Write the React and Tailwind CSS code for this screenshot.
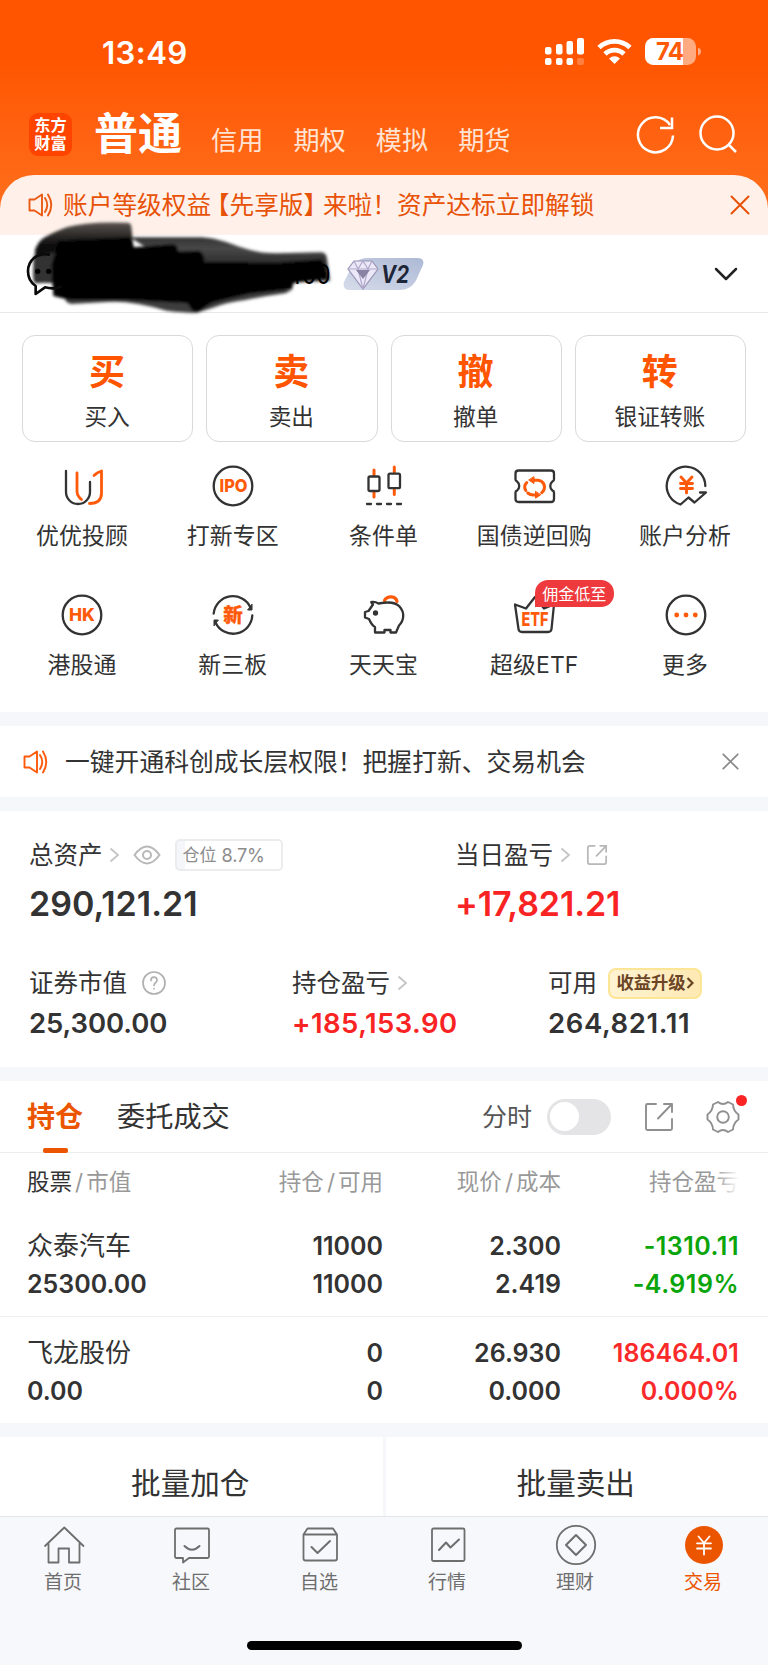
import React, { useState } from 'react'
import { clsx } from 'clsx'

const MARKETS = ['信用', '期权', '模拟', '期货']

const ACTIONS = [
    { mark: '买', label: '买入' },
    { mark: '卖', label: '卖出' },
    { mark: '撤', label: '撤单' },
    { mark: '转', label: '银证转账' },
]

const DARK = '#333333'
const ORANGE = '#ff5a0a'

const SERVICES = [
    { label: '优优投顾', icon: AdvisorIcon },
    { label: '打新专区', icon: IpoIcon },
    { label: '条件单', icon: CandleIcon },
    { label: '国债逆回购', icon: RepoIcon },
    { label: '账户分析', icon: AnalysisIcon },
    { label: '港股通', icon: HkIcon },
    { label: '新三板', icon: NeeqIcon },
    { label: '天天宝', icon: PiggyIcon },
    { label: '超级ETF', icon: EtfIcon, badge: '佣金低至' },
    { label: '更多', icon: MoreIcon },
]

const HOLDINGS = [
    { name: '众泰汽车', value: '25300.00', qty: '11000', usable: '11000', price: '2.300', cost: '2.419', pnl: '-1310.11', rate: '-4.919%', color: 'text-[#0aa50a] tracking-[0.5px]' },
    { name: '飞龙股份', value: '0.00', qty: '0', usable: '0', price: '26.930', cost: '0.000', pnl: '186464.01', rate: '0.000%', color: 'text-[#fa2a2a] tracking-[0.1px]' },
]

const NAV = [
    { label: '首页', icon: HomeIcon },
    { label: '社区', icon: ChatIcon },
    { label: '自选', icon: WatchIcon },
    { label: '行情', icon: QuoteIcon },
    { label: '理财', icon: WealthIcon },
    { label: '交易', icon: TradeIcon, active: true },
]

/* ---------- service icons, 44x44 ---------- */

function ServiceSvg({ children }) {
    return (
        <svg width="44" height="44" viewBox="0 0 44 44" fill="none" stroke={DARK} strokeWidth="2.3" strokeLinecap="round" strokeLinejoin="round">
            {children}
        </svg>
    )
}

function AdvisorIcon() {
    return (
        <ServiceSvg>
            <path d="M6 7v21a12 12 0 0 0 24 0V18" />
            <path d="M17 9v18q0 5 4.500 8.500" stroke={ORANGE} strokeWidth="2.800" />
            <path d="M34 11.500q3-3 7.500-4.500v22q0 10.500-12 10.500" stroke={ORANGE} strokeWidth="2.800" />
        </ServiceSvg>
    )
}

function IpoIcon() {
    return (
        <ServiceSvg>
            <circle cx="22" cy="22" r="19.300" />
            <text x="22.500" y="28.300" textAnchor="middle" fontSize="17.500" fontWeight="800" textLength="28" lengthAdjust="spacingAndGlyphs" fill={ORANGE} stroke="none" fontFamily="Inter, sans-serif">IPO</text>
        </ServiceSvg>
    )
}

function CandleIcon() {
    return (
        <ServiceSvg>
            <g stroke={ORANGE} strokeWidth="3">
                <path d="M12 6v5M12 28v5M32.300 3v5M32.300 25.500v5" />
            </g>
            <rect x="6.500" y="12.500" width="11" height="14.500" rx="1.500" />
            <rect x="26.500" y="9.700" width="11.500" height="14.500" rx="1.500" />
            <path d="M5 40h34" strokeDasharray="4 6" />
        </ServiceSvg>
    )
}

function RepoIcon() {
    return (
        <ServiceSvg>
            <path d="M5.500 6.500h32.500q3 0 3 3v6q0 1.300-1.500 1.800c-3 2.500-3 6.900 0 9.400q1.500.5 1.500 1.800v6.500q0 3-3 3H5.500q-3 0-3-3v-6.500q0-1.300 1.500-1.800c3-2.500 3-6.900 0-9.400q-1.500-.5-1.500-1.800v-6q0-3 3-3z" />
            <g stroke={ORANGE} strokeWidth="3">
                <path d="M12.800 26.500c-2.500-4-.5-6.500 1-8M20 16.300h5c5 .5 8 5 5.700 10M30.700 26.500l-2 2.200M23.500 31h-3q-3.500-.2-5.700-2" />
                <path d="M21 13v6.500l-5-3.300zM22.500 27.700v6.500l5-3.300z" fill={ORANGE} strokeWidth="1" />
            </g>
        </ServiceSvg>
    )
}

function AnalysisIcon() {
    return (
        <ServiceSvg>
            <path d="M41.300 22A19.300 19.300 0 1 0 16.500 40.500l8-7 6 5L42 28.500h-6" />
            <path d="M17 13l5.500 6L28 13M16.500 19.500h12M16.500 24.500h12M22.500 19.500v9.500" stroke={ORANGE} strokeWidth="2.900" />
        </ServiceSvg>
    )
}

function HkIcon() {
    return (
        <ServiceSvg>
            <circle cx="22" cy="22" r="19.300" />
            <text x="22" y="28.300" textAnchor="middle" fontSize="17.500" fontWeight="800" textLength="26" lengthAdjust="spacingAndGlyphs" fill={ORANGE} stroke="none" fontFamily="Inter, sans-serif">HK</text>
        </ServiceSvg>
    )
}

function NeeqIcon() {
    return (
        <ServiceSvg>
            <path d="M2.700 20.500A19.300 19.300 0 0 1 39.500 14.500" />
            <path d="M41.300 22.500A19.300 19.300 0 0 1 4.500 29.500" />
            <path d="M41 11.500v5.500h-4zM3 32.500v-5.500h4z" fill={DARK} strokeWidth="1" />
            <text x="22" y="29" textAnchor="middle" fontSize="19.500" fontWeight="900" fill={ORANGE} stroke={ORANGE} strokeWidth="0.300" fontFamily="'Noto Sans CJK SC', sans-serif">新</text>
        </ServiceSvg>
    )
}

function PiggyIcon() {
    return (
        <ServiceSvg>
            <path d="M22.500 7.500c2.500-5 11.500-5 12.500 1" stroke={ORANGE} strokeWidth="3.200" />
            <path d="M11 11.500c-1.500-1.500-2-2.500-1.500-2.500 2.500-.3 5 .3 7 1.500 11-2 17-1.500 21 3 5.500 6 4.500 14-.5 19l-3 7h-5.500v-2.500h-6v2.500H13v-5.500c-3-1.500-4.500-4.500-6-8l-4-1.500v-5.500l3.500-1z" />
            <circle cx="13.500" cy="20" r="1.500" fill={DARK} />
        </ServiceSvg>
    )
}

function EtfIcon() {
    return (
        <ServiceSvg>
            <path d="M2 11.500l11 4 9-11.500 9 11.500 10-4-2.500 24.500q-.3 3-3.500 3H9q-3.200 0-3.500-3z" />
            <text x="22" y="32.500" textAnchor="middle" fontSize="19" fontWeight="800" fill={ORANGE} stroke="none" textLength="27" lengthAdjust="spacingAndGlyphs" fontFamily="Inter, sans-serif">ETF</text>
        </ServiceSvg>
    )
}

function MoreIcon() {
    return (
        <ServiceSvg>
            <circle cx="22" cy="22" r="19.300" />
            <g fill={ORANGE} stroke="none">
                <circle cx="12.700" cy="22" r="2.400" />
                <circle cx="22" cy="22" r="2.400" />
                <circle cx="31.300" cy="22" r="2.400" />
            </g>
        </ServiceSvg>
    )
}

/* ---------- bottom nav icons, 42x42 ---------- */

function NavSvg({ children }) {
    return (
        <svg width="42" height="42" viewBox="0 0 42 42" fill="none" stroke="#6e6e6e" strokeWidth="1.800" strokeLinecap="round" strokeLinejoin="round">
            {children}
        </svg>
    )
}

function HomeIcon() {
    return <NavSvg><path d="M2 22L21.300 3.500 40.500 22M5.500 19.500v19h10v-14h10.500v14h10.500v-19" /></NavSvg>
}

function ChatIcon() {
    return (
        <NavSvg>
            <path d="M5.500 4.500h31q1.500 0 1.500 1.500v26.500q0 1.500-1.500 1.500H18l-6 4.500V34H5.500Q4 34 4 32.500V6q0-1.500 1.500-1.500z" />
            <path d="M13.500 22q7.500 7.500 15 0" strokeWidth="2" />
        </NavSvg>
    )
}

function WatchIcon() {
    return (
        <NavSvg>
            <path d="M4.500 10.500l4-6h25.500l4 6v24q0 2-2 2H6.500q-2 0-2-2zM4.500 10.500H38" />
            <path d="M12.500 23l6 6L31 17" strokeWidth="2" />
        </NavSvg>
    )
}

function QuoteIcon() {
    return (
        <NavSvg>
            <rect x="5" y="4.500" width="32.500" height="32.500" rx="1.500" />
            <path d="M12 26l7-7.500 4.500 5L32 15.500" strokeWidth="2" />
        </NavSvg>
    )
}

function WealthIcon() {
    return (
        <NavSvg>
            <circle cx="21" cy="21" r="19.200" />
            <path d="M21 11l10 10-10 10-10-10z" strokeWidth="2" />
        </NavSvg>
    )
}

function TradeIcon() {
    return (
        <NavSvg>
            <circle cx="21" cy="21" r="19" fill="#eb5500" stroke="none" />
            <path d="M15.500 12.500l5.500 6.500 5.500-6.500M14 19.300h14M14 24.500h14M21 19v11.500" stroke="#fff" strokeWidth="1.800" />
        </NavSvg>
    )
}

/* ---------- small shared icons ---------- */

function Speaker({ color }) {
    return (
        <svg width="26" height="26" viewBox="0 0 26 26" fill="none" stroke={color} strokeWidth="1.900" strokeLinejoin="round" strokeLinecap="round">
            <path d="M1.500 7.500h5L14 2.500v21l-7.500-5h-5z" />
            <path d="M17 6q4.500 7 0 14M20 2.500q6.500 10.500 0 21" />
        </svg>
    )
}

function Cross({ size, color }) {
    return (
        <svg width={size} height={size} viewBox="0 0 20 20" fill="none" stroke={color} strokeWidth="2" strokeLinecap="round">
            <path d="M1.500 1.500l17 17M18.500 1.500l-17 17" />
        </svg>
    )
}

function Chevron() {
    return (
        <svg width="11" height="16" viewBox="0 0 11 16" fill="none" stroke="#c4c4c4" strokeWidth="1.800">
            <path d="M1.500 1.500L9 8l-7.500 6.500" />
        </svg>
    )
}

function StatusBar() {
    return (
        <div className="flex h-[104px] items-center pl-[102px] pr-[67px] text-white">
            <span className="mt-[3px] text-[31.200px] font-semibold leading-none tracking-[0.4px]">13:49</span>
            <svg className="ml-auto" width="156" height="30" viewBox="0 0 156 30" fill="#fff">
                <rect x="0" y="10" width="6.500" height="7.500" rx="2" />
                <rect x="11" y="7" width="6.500" height="10.500" rx="2" />
                <rect x="21.500" y="4" width="6.500" height="13.500" rx="2" />
                <rect x="32" y="1" width="7" height="16.500" rx="2" />
                <rect x="0" y="21" width="6.500" height="7" rx="2" />
                <rect x="11" y="21" width="6.500" height="7" rx="2" />
                <rect x="21.500" y="21" width="6.500" height="7" rx="2" />
                <rect x="32" y="21" width="7" height="7" rx="2" opacity="0.250" />
                <g fill="none" stroke="#fff" strokeWidth="4.700">
                    <path d="M54 10.500a22.500 22.500 0 0 1 31 0" />
                    <path d="M60 17a13.500 13.500 0 0 1 19 0" />
                </g>
                <path d="M64 21.500q5.500-4.500 11 0l-5.500 5.500z" />
                <clipPath id="battery"><rect x="100" y="1" width="51" height="27" rx="8.500" /></clipPath>
                <g clipPath="url(#battery)">
                    <rect x="100" y="1" width="51" height="27" opacity="0.500" />
                    <rect x="100" y="1" width="38" height="27" />
                </g>
                <path d="M153 10.500q3 1 3 4t-3 4z" opacity="0.500" />
                <text x="125" y="23" textAnchor="middle" fontSize="24" fontWeight="700" textLength="28" fill="#ff5a06">74</text>
            </svg>
        </div>
    )
}

function Header() {
    return (
        <div className="flex h-[71px] items-center pl-[29px] pr-[30px] text-white">
            <div className="mt-[-11px] grid h-[43px] w-[43px] place-content-center rounded-[9px] bg-[#ff4400] text-center text-[16.200px] font-bold leading-[18px]">
                东方<br />财富
            </div>
            <div className="ml-[22px] mt-[-12px] text-[44px] font-bold leading-none">普通</div>
            <div className="ml-[29px] mt-[4px] flex gap-[30px] text-[26.200px] leading-none text-[#ffe3d3]">
                {MARKETS.map(m => <span key={m}>{m}</span>)}
            </div>
            <svg className="ml-auto mt-[-12px]" width="40" height="40" viewBox="0 0 40 40" fill="none" stroke="#fff" strokeWidth="2.500">
                <path d="M37 21.500A17.500 17.500 0 1 1 34 11" />
                <path d="M36 3.500v10.500H24" />
            </svg>
            <svg className="ml-[22px] mt-[-12px]" width="40" height="40" viewBox="0 0 40 40" fill="none" stroke="#fff" strokeWidth="2.500">
                <circle cx="19" cy="19" r="16.500" />
                <path d="M30.500 30.500l7.500 7.500" />
            </svg>
        </div>
    )
}

// Marker strokes that hide the account number
function Redaction() {
    return (
        <svg className="pointer-events-none absolute left-0 top-[-25px]" width="440" height="120" viewBox="0 0 1320 360">
            <defs>
                <filter id="soft" x="-5%" y="-5%" width="110%" height="110%"><feGaussianBlur stdDeviation="4" /></filter>
                <linearGradient id="fade" gradientUnits="userSpaceOnUse" x1="0" y1="36" x2="0" y2="110">
                    <stop offset="0" stopColor="#5a5450" />
                    <stop offset="1" stopColor="#080808" />
                </linearGradient>
                <linearGradient id="sweep" gradientUnits="userSpaceOnUse" x1="0" y1="80" x2="0" y2="165">
                    <stop offset="0" stopColor="#303030" />
                    <stop offset="0.400" stopColor="#484848" />
                    <stop offset="1" stopColor="#2a2a2a" />
                </linearGradient>
            </defs>
            <g filter="url(#soft)">
                <path d="M116 98Q130 78 200 52q60-18 180-14 14 0 14 12l6 60-100 60-140 50-38-4-22-20 6-80z" fill="url(#fade)" />
                <path d="M100 140l70-14v90l-60 4q-10-2-10-14z" fill="#333" />
                <path d="M390 82h200c100 0 130 48 240 48l130-3q18 0 20 14l10 72-150 4H600z" fill="url(#sweep)" />
                <path d="M186 240h690l-20 10q-60 8-120 20-60 8-100 24l-46 14q-40 0-90-6-110-32-180-26l-106 6q-18-2-20-20z" fill="#3c3c3c" />
                <path d="M176 92l214-10 12 30 118-10q14 4 14 22l64-2q14 6 16 34l220 2 130-10q14 20 18 56l-102 16-4 18-130 14-110 26-42 28-16-2-16-24-180-10H210l-50-12-6-90z" fill="#000" />
            </g>
            <path d="M150 134c-40-8-66 18-66 50 0 22 8 34 23 44v24l28-20q30 8 50-4" fill="none" stroke="#0a0a0a" strokeWidth="8" strokeLinejoin="round" />
            <g fill="#000"><circle cx="113" cy="184" r="8" /><circle cx="146" cy="184" r="8" /></g>
            <text x="862" y="221" fontSize="82" fill="#000" textLength="130" lengthAdjust="spacingAndGlyphs">400</text>
        </svg>
    )
}

function AccountRow() {
    return (
        <div className="relative flex h-[78px] shrink-0 items-center border-b border-[#e8e8e8] bg-white pl-[343px] pr-[30px]">
            <Redaction />
            <svg width="82" height="34" viewBox="0 0 82 34">
                <defs>
                    <linearGradient id="pill" x1="0" y1="1" x2="1" y2="0">
                        <stop offset="0" stopColor="#d6dcea" />
                        <stop offset="1" stopColor="#adb9d5" />
                    </linearGradient>
                </defs>
                <path d="M24 1h50q8 0 6 7l-5 11q-5 14-19 14H7q-8 0-6-8l5-10Q12 1 24 1z" fill="url(#pill)" />
                <path d="M11 4h18l6 8-15 20L5 12z" fill="#ece8f8" stroke="#9a93b5" strokeWidth="1.200" />
                <path d="M5 12h30M11 4l4 8 5 20 5-20 4-8M15 12l5-8 5 8" fill="none" stroke="#b0a9cb" strokeWidth="1.200" />
                <path d="M13 13h14l-7 9z" fill="#8982a3" />
                <text x="38" y="25.500" fontSize="24" fontWeight="700" fontStyle="italic" fill="#1d2538" textLength="28" lengthAdjust="spacingAndGlyphs">V2</text>
            </svg>
            <svg className="ml-auto" width="24" height="14" viewBox="0 0 24 14" fill="none" stroke="#222" strokeWidth="2.500" strokeLinecap="round" strokeLinejoin="round">
                <path d="M2 2l10 10L22 2" />
            </svg>
        </div>
    )
}

function Service({ item }) {
    const Icon = item.icon
    return (
        <div className="flex h-[129px] flex-col items-center">
            <div className="relative h-[44px]">
                <Icon />
                {item.badge && (
                    <span className="absolute left-[22px] top-[-13px] flex h-[27px] w-[79px] items-center justify-center rounded-[13px] rounded-bl-none bg-[#ee3a3c] text-[16px] leading-none text-white">
                        {item.badge}
                    </span>
                )}
            </div>
            <span className="mt-[16px] whitespace-nowrap pr-px text-[22.900px] leading-[24px] tracking-[0.1px] text-[#333]">{item.label}</span>
        </div>
    )
}

function Label({ children }) {
    return <span className="text-[24.500px] leading-none text-[#333]">{children}</span>
}

function ShareIcon({ size, color }) {
    return (
        <svg width={size} height={size} viewBox="0 0 24 24" fill="none" stroke={color} strokeWidth="1.900" strokeLinecap="round">
            <path d="M9.500 2H4.500Q2 2 2 4.500v15Q2 22 4.500 22h15q2.500 0 2.500-2.500V13.500M15.500 2H22v6.500M22 2L11.500 13" />
        </svg>
    )
}

function Assets() {
    return (
        <section className="h-[256px] bg-white pl-[29px] pt-[28px]">
            <div className="flex">
                <div className="w-[426px]">
                    <div className="flex h-8 items-center">
                        <Label>总资产</Label>
                        <div className="ml-[6px]"><Chevron /></div>
                        <svg className="ml-[13px]" width="28" height="20" viewBox="0 0 28 20" fill="none" stroke="#b8b8b8" strokeWidth="2">
                            <path d="M1.500 10Q14-7 26.500 10 14 27 1.500 10z" />
                            <circle cx="14" cy="10" r="4" />
                        </svg>
                        <span className="ml-[14px] flex h-8 w-[108px] items-center gap-[5px] rounded-[5px] border-2 border-[#ececee] bg-linear-to-r from-[#f5f6f9] from-8% to-white to-8% pl-[6px] pt-px text-[17px] leading-none text-[#8c8c8c]">
                            仓位 <span className="text-[18.200px] tracking-[-0.2px]">8.7%</span>
                        </span>
                    </div>
                    <div className="mt-[16px] text-[34px] font-semibold leading-[34px] text-[#333]">290,121.21</div>
                </div>
                <div>
                    <div className="flex h-8 items-center">
                        <Label>当日盈亏</Label>
                        <div className="ml-[7px]"><Chevron /></div>
                        <div className="ml-[15px]"><ShareIcon size={22} color="#b8b8b8" /></div>
                    </div>
                    <div className="mt-[16px] text-[34px] font-semibold leading-[34px] tracking-[-0.1px] text-[#fa2323]">+17,821.21</div>
                </div>
            </div>
            <div className="mt-[46px] flex">
                <div className="w-[263px]">
                    <div className="flex h-8 items-center">
                        <Label>证券市值</Label>
                        <svg className="ml-[15px]" width="24" height="24" viewBox="0 0 24 24" fill="none" stroke="#b0b0b0" strokeWidth="1.700" strokeLinecap="round">
                            <circle cx="12" cy="12" r="11" />
                            <path d="M9 9.500q0-3.300 3-3.300t3 3q0 1.500-1.500 2.500T12 14.500M12 17.500v.2" />
                        </svg>
                    </div>
                    <div className="mt-[10px] text-[27.500px] font-semibold leading-7 tracking-[-0.1px] text-[#333]">25,300.00</div>
                </div>
                <div className="w-[256px]">
                    <div className="flex h-8 items-center">
                        <Label>持仓盈亏</Label>
                        <div className="ml-[7px]"><Chevron /></div>
                    </div>
                    <div className="mt-[10px] text-[27.500px] font-semibold leading-7 tracking-[0.45px] text-[#fa2323]">+185,153.90</div>
                </div>
                <div>
                    <div className="flex h-8 items-center">
                        <Label>可用</Label>
                        <span className="ml-[11px] flex h-[31px] w-[94px] items-center justify-center rounded-[8px] border-2 border-[#fde596] bg-linear-to-r from-[#fff3d2] to-[#ffe9b3] pb-px text-[17.300px] font-bold leading-none text-[#6b4426]">
                            收益升级
                            <svg width="8" height="12" viewBox="0 0 8 12" fill="none" stroke="#6b4426" strokeWidth="2.200"><path d="M1.500 1L6.500 6l-5 5" /></svg>
                        </span>
                    </div>
                    <div className="mt-[10px] text-[27.500px] font-semibold leading-7 tracking-[0.6px] text-[#333]">264,821.11</div>
                </div>
            </div>
        </section>
    )
}

function HoldingTabs({ intraday, onToggle }) {
    return (
        <div className="flex h-[72px] items-center border-b border-[#ededed] bg-white pl-[27px] pr-[28px]">
            <div className="relative text-[28px] font-bold leading-[74px] text-[#eb5500]">
                持仓
                <span className="absolute bottom-px left-[16px] h-[5px] w-[25px] rounded-[2px] bg-[#eb5500]" />
            </div>
            <span className="ml-[34px] mt-[2px] text-[28.200px] leading-none text-[#333]">委托成交</span>
            <span className="ml-auto mt-[2px] text-[25px] leading-none text-[#555]">分时</span>
            <button
                onClick={onToggle}
                className={clsx('ml-[15px] flex h-9 w-16 items-center rounded-full px-[3px]', intraday ? 'justify-end bg-[#eb5500]' : 'bg-[#e4e4e6]')}
            >
                <span className="h-[29px] w-[29px] rounded-full bg-white" />
            </button>
            <svg className="ml-[33px]" width="30" height="30" viewBox="0 0 30 30" fill="none" stroke="#8f8f8f" strokeWidth="1.900" strokeLinecap="round" strokeLinejoin="round">
                <path d="M12 2H3.500Q2 2 2 3.500v23Q2 28 3.500 28h23q1.500 0 1.500-1.500V17M20 2h8v8M28 2L14 16.500" />
            </svg>
            <div className="relative ml-[32px]">
                <svg width="34" height="34" viewBox="0 0 34 34" fill="none" stroke="#8f8f8f" strokeWidth="1.900" strokeLinejoin="round">
                    <path d="M12 2Q17 6 22 2L27 4.500q.3 6.500 5.500 10v5Q27.300 23 27 29.500L22 32Q17 28 12 32l-5-2.500Q6.700 23 1.500 19.500v-5Q6.700 11 7 4.500z" />
                    <circle cx="17" cy="17" r="5.800" />
                </svg>
                <span className="absolute left-[30px] top-[-5px] h-[11px] w-[11px] rounded-full bg-[#fb2424]" />
            </div>
        </div>
    )
}

function Slash() {
    return <span className="mx-[3px]">/</span>
}

function Holding({ row, last }) {
    return (
        <div className={clsx('grid grid-cols-[201px_155px_178px_178px] grid-rows-[38px_38px] bg-white pl-[27px] pt-[17px] text-right text-[25px] font-semibold leading-[38px] text-[#333]', last ? 'h-[106px]' : 'h-[107px] border-b border-[#eeeeee]')}>
            <span className="text-left text-[26px] font-normal">{row.name}</span>
            <span>{row.qty}</span>
            <span>{row.price}</span>
            <span className={row.color}>{row.pnl}</span>
            <span className="text-left">{row.value}</span>
            <span>{row.usable}</span>
            <span>{row.cost}</span>
            <span className={row.color}>{row.rate}</span>
        </div>
    )
}

export default function App() {
    const [intraday, setIntraday] = useState(false)

    return (
        <div className="flex h-[1665px] w-[768px] flex-col overflow-hidden bg-[#f6f7fa] font-[Inter,'Noto_Sans_CJK_SC',sans-serif]">
            <div className="h-[235px] shrink-0 bg-linear-to-b from-[#ff5500] from-25% to-[#ff6d1a] to-85%">
                <StatusBar />
                <Header />
                <div className="flex h-[60px] items-center rounded-t-[34px] bg-[#fff1ea] pl-7 pr-[18px]">
                    <Speaker color="#eb5a14" />
                    <span className="ml-[9px] flex whitespace-nowrap text-[24.700px] leading-none text-[#e85207]">
                        账户等级权益
                        <span className="ml-[6px] [font-feature-settings:'halt']">【</span>
                        先享版
                        <span className="mr-[7px] [font-feature-settings:'halt']">】</span>
                        来啦！资产达标立即解锁
                    </span>
                    <div className="ml-auto"><Cross size={20} color="#e85207" /></div>
                </div>
            </div>

            <AccountRow />

            <div className="flex h-[129px] shrink-0 gap-[13px] bg-white px-[22px] pt-[22px]">
                {ACTIONS.map(a => (
                    <button key={a.label} className="flex h-[107px] flex-1 flex-col items-center rounded-[13px] border border-[#d9d9d9] pr-px text-[#333]">
                        <span className="mt-[17px] text-[36px] font-bold leading-[38px] text-[#ff5500]">{a.mark}</span>
                        <span className="mt-[14px] text-[22.700px] leading-[24px]">{a.label}</span>
                    </button>
                ))}
            </div>

            <div className="grid h-[270px] shrink-0 grid-cols-5 content-start bg-white px-[7px] pt-[22px]">
                {SERVICES.map(s => <Service key={s.label} item={s} />)}
            </div>

            <div className="mt-[14px] flex h-[71px] shrink-0 items-center bg-white pl-[23px] pr-[29px]">
                <Speaker color="#ff5a0a" />
                <span className="ml-[16px] mt-px text-[24.800px] leading-none text-[#333]">一键开通科创成长层权限！把握打新、交易机会</span>
                <div className="ml-auto"><Cross size={17} color="#8a8a8a" /></div>
            </div>

            <div className="mt-[14px] shrink-0"><Assets /></div>

            <div className="mt-[14px] shrink-0">
                <HoldingTabs intraday={intraday} onToggle={() => setIntraday(!intraday)} />
                <div className="grid h-[57px] grid-cols-[201px_155px_178px_178px] items-center bg-white pl-[27px] pt-px text-right text-[22.500px] leading-none text-[#999]">
                    <span className="text-left"><span className="text-[#333]">股票</span><Slash />市值</span>
                    <span>持仓<Slash />可用</span>
                    <span>现价<Slash />成本</span>
                    <span className="relative">
                        持仓盈亏
                        <span className="absolute right-0 top-[-4px] h-8 w-6 bg-linear-to-r from-white/0 to-white" />
                    </span>
                </div>
                {HOLDINGS.map((h, i) => <Holding key={h.name} row={h} last={i === HOLDINGS.length - 1} />)}
            </div>

            <div className="mt-[14px] grid h-[79px] shrink-0 grid-cols-2 gap-[3px] text-center text-[29.600px] leading-[93px] text-[#333]">
                <span className="bg-white pr-[2px]">批量加仓</span>
                <span className="bg-white pr-[2px]">批量卖出</span>
            </div>

            <nav className="flex flex-1 flex-col items-center border-t border-[#e6e6e9] bg-[#f7f8fb]">
                <div className="grid w-full grid-cols-6 pt-[7px]">
                    {NAV.map(n => (
                        <div key={n.label} className={clsx('flex flex-col items-center text-[19px] leading-[24px]', n.active ? 'text-[#eb5500]' : 'text-[#6e6e6e]')}>
                            <n.icon />
                            <span className="mt-[5px] pr-[2px]">{n.label}</span>
                        </div>
                    ))}
                </div>
                <div className="mt-[46px] h-[9px] w-[275px] rounded-full bg-black" />
            </nav>
        </div>
    )
}
